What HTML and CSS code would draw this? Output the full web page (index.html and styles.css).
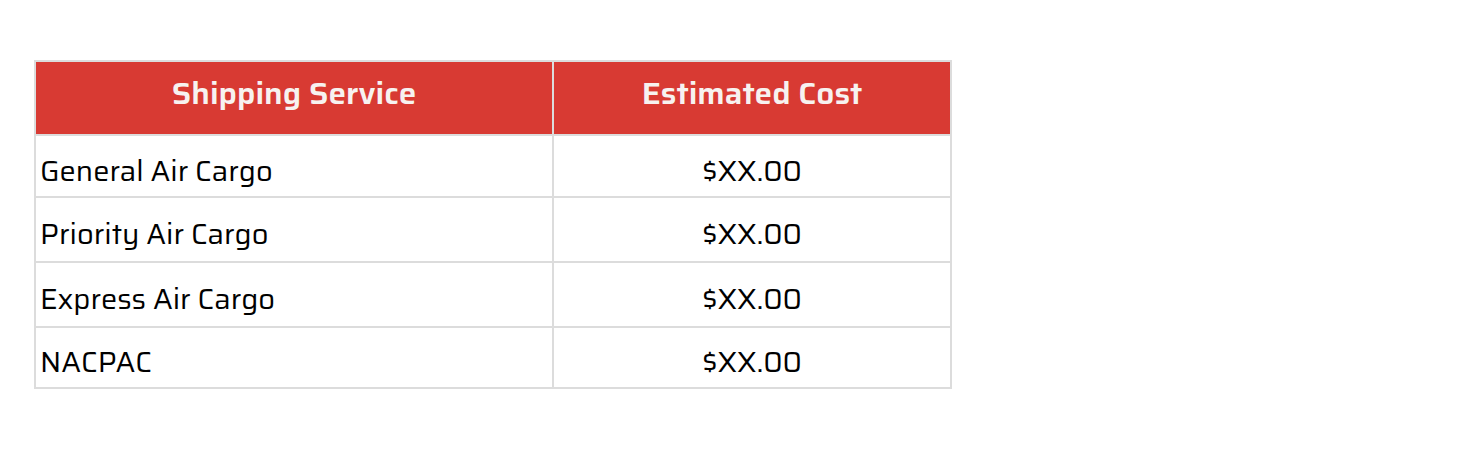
FILE: index.html
```html
<!DOCTYPE html>
<html>
<head>
<meta charset="utf-8">
<link rel="stylesheet" href="styles.css">
</head>
<body>
<div class="wrap">
<table class="rates">
  <thead>
    <tr><th class="c1">Shipping Service</th><th class="c2">Estimated Cost</th></tr>
  </thead>
  <tbody>
    <tr class="r1"><td>General Air Cargo</td><td class="price">$XX.00</td></tr>
    <tr class="r2"><td>Priority Air Cargo</td><td class="price">$XX.00</td></tr>
    <tr class="r3"><td>Express Air Cargo</td><td class="price">$XX.00</td></tr>
    <tr class="r4"><td>NACPAC</td><td class="price">$XX.00</td></tr>
  </tbody>
</table>
</div>
</body>
</html>
```
FILE: styles.css
```css
html, body { margin: 0; padding: 0; background: #fff; }
body { font-family: "Saira", Roboto, "Liberation Sans", sans-serif; color: #000; }
.wrap { padding: 60px 0 0 34px; }
.rates { border-collapse: collapse; width: 918px; table-layout: fixed; }
.rates th, .rates td { border: 2px solid #dcdcdc; padding: 0; }
.c1 { width: 518px; }
.rates th {
  background: #d83a33; color: #f7f2f0; font-weight: 600; font-size: 31.5px; line-height: 1.2;
  height: 74px; text-align: center; vertical-align: middle; padding-bottom: 8px; box-sizing: border-box;
}
.rates td { font-size: 29px; font-weight: 400; line-height: 1.2; padding: 10px 4px 0 4px; vertical-align: middle; }
.rates td.price { text-align: center; }
.r1 td { height: 50px; }
.r2 td { height: 53px; }
.r3 td { height: 53px; }
.r4 td { height: 49px; }
```
